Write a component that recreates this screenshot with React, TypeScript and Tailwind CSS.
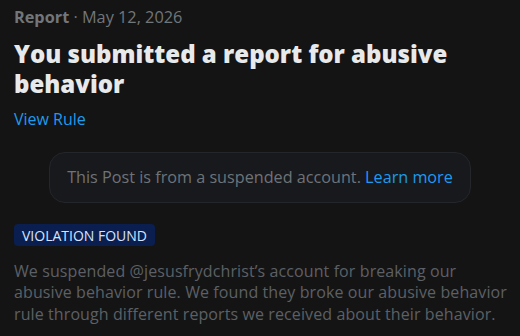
import React from "react";

export default function App() {
  return (
    <div
      className="w-[520px] h-[336px] bg-[#141414] overflow-hidden px-[14px]"
      style={{ fontFamily: '"Open Sans", "Noto Sans", sans-serif' }}
    >
      <div className="pt-[5px] text-[16.3px] leading-[24px] text-[#71767b]">
        <span className="font-bold">Report</span>
        <span> · May 12, 2026</span>
      </div>
      <h1 className="mt-[10px] text-[24px] leading-[30px] font-extrabold text-[#e7e9ea]">
        You submitted a report for abusive behavior
      </h1>
      <div className="mt-[10px] text-[16px] leading-[20px] text-[#1d9bf0]">View Rule</div>
      <div className="mt-[23px] mx-[35px] h-[51px] rounded-[16px] border border-[#23262b] bg-[#17191d] flex items-center justify-center text-[16.2px] text-[#6e7378]">
        <span>
          This Post is from a suspended account. <span className="text-[#1d9bf0]">Learn more</span>
        </span>
      </div>
      <div className="mt-[21px] inline-flex items-center h-[22px] px-[8px] rounded-[4px] bg-[#0a1f4f] text-[14px] text-[#d6e4ff]">
        VIOLATION FOUND
      </div>
      <p className="mt-[14px] -mr-[8px] text-[16px] tracking-[0.1px] leading-[21.5px] text-[#5c6066]">
        We suspended @jesusfrydchrist’s account for breaking our abusive behavior rule. We found they broke our abusive behavior rule through different reports we received about their behavior.
      </p>
    </div>
  );
}
